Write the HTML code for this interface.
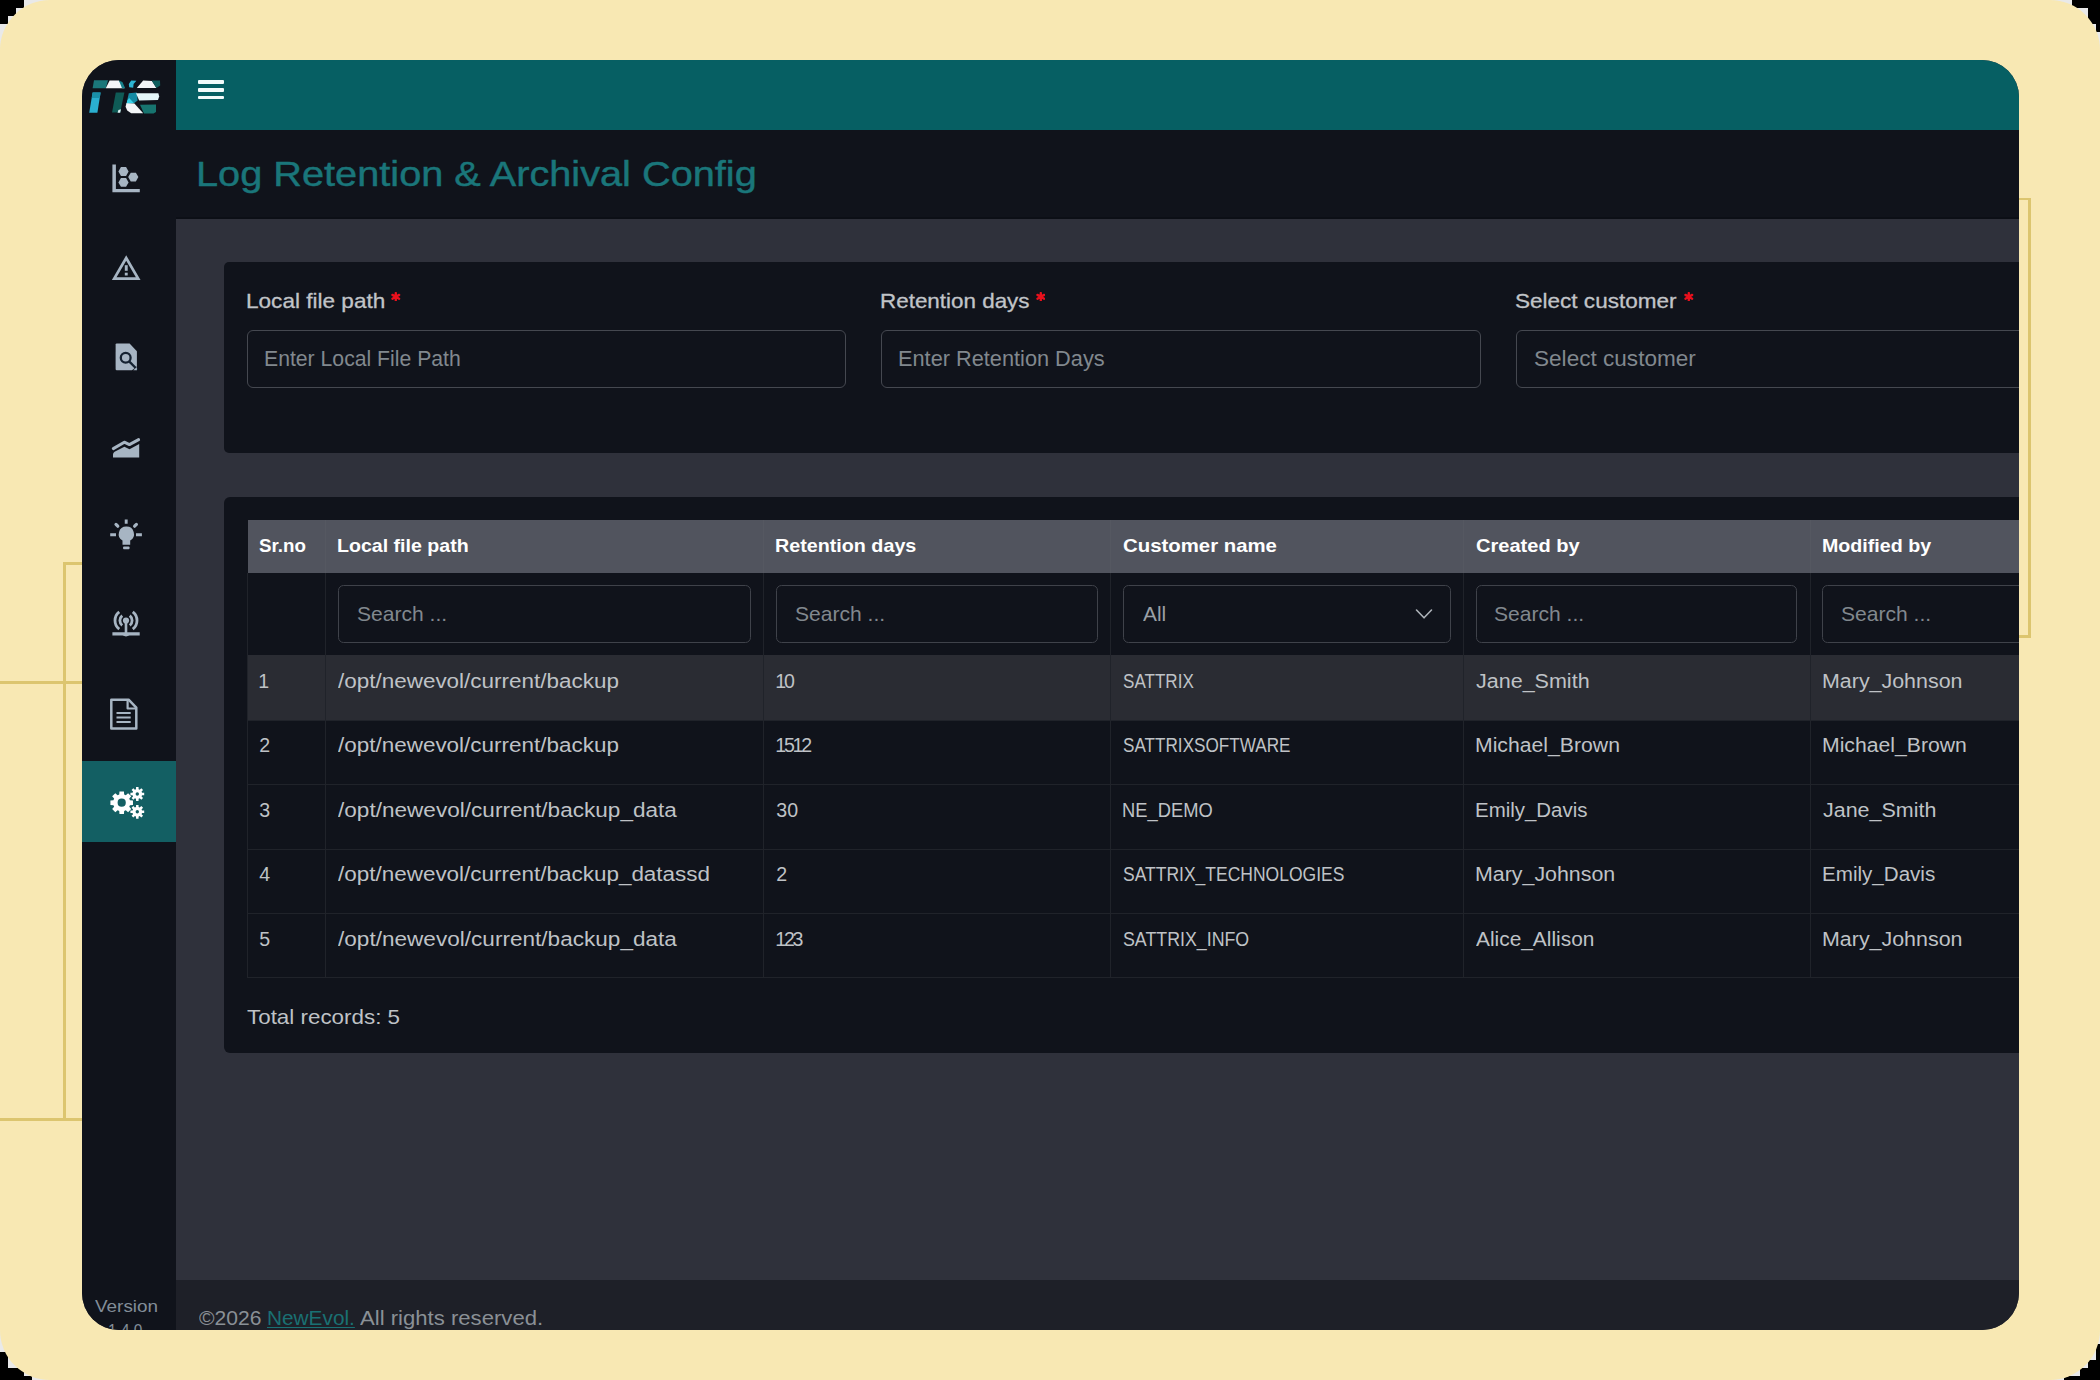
<!DOCTYPE html>
<html><head><meta charset="utf-8"><title>Log Retention &amp; Archival Config</title>
<style>
html,body{margin:0;padding:0;}
body{width:2100px;height:1380px;overflow:hidden;background:#E9E9E9;position:relative;font-family:"Liberation Sans",sans-serif;}
.k{position:absolute;background:#000;}
#cream{position:absolute;left:0;top:0;width:2100px;height:1380px;background:#F8E8B3;border-radius:50px;}
.ln{position:absolute;background:#DCC56F;}
#win{position:absolute;left:82px;top:59.6px;width:1937px;height:1270.0px;border-radius:37px;overflow:hidden;background:#2F313B;}
.b{position:absolute;}
.t{position:absolute;white-space:pre;line-height:1;transform-origin:0 0;}
</style></head><body>
<div class="k" style="left:0;top:0;width:24px;height:8px"></div><div class="k" style="left:0;top:8px;width:16px;height:8px"></div><div class="k" style="left:0;top:16px;width:8px;height:8px"></div>
<div class="k" style="left:2072px;top:0;width:28px;height:8px"></div><div class="k" style="left:2088px;top:8px;width:12px;height:16px"></div><div class="k" style="left:2096px;top:24px;width:4px;height:8px"></div>
<div class="k" style="left:0;top:1352px;width:8px;height:28px"></div><div class="k" style="left:8px;top:1368px;width:16px;height:12px"></div><div class="k" style="left:24px;top:1376px;width:8px;height:4px"></div>
<div class="k" style="left:2096px;top:1344px;width:4px;height:36px"></div><div class="k" style="left:2088px;top:1360px;width:8px;height:20px"></div><div class="k" style="left:2080px;top:1368px;width:8px;height:12px"></div><div class="k" style="left:2064px;top:1376px;width:16px;height:4px"></div>
<div id="cream"></div>
<div class="ln" style="left:63px;top:562px;width:2.8px;height:557.5px"></div>
<div class="ln" style="left:63px;top:562px;width:20px;height:2.6px"></div>
<div class="ln" style="left:0;top:681px;width:83px;height:2.7px"></div>
<div class="ln" style="left:0;top:1118.2px;width:83px;height:2.7px"></div>
<div class="ln" style="left:2018px;top:198px;width:12.6px;height:2.4px"></div>
<div class="ln" style="left:2028.2px;top:198px;width:2.4px;height:439.5px"></div>
<div class="ln" style="left:2018px;top:635.2px;width:12.6px;height:2.4px"></div>
<div id="win">
<div class="b" style="left:0.00px;top:-0.60px;width:94.00px;height:1272.00px;background:#10131B;"></div>
<div class="b" style="left:94.00px;top:-0.60px;width:1844.00px;height:71.40px;background:#065F63;"></div>
<div class="b" style="left:94.00px;top:70.80px;width:1844.00px;height:88.30px;background:#10131B;"></div>
<div class="b" style="left:94.00px;top:157.60px;width:1844.00px;height:1.50px;background:#0C0F16;"></div>
<div class="b" style="left:94.00px;top:1220.80px;width:1844.00px;height:50.60px;background:#1E2028;"></div>
<div class="b" style="left:0.00px;top:701.20px;width:94.00px;height:81.50px;background:#135F63;"></div>
<div class="b" style="left:116.00px;top:20.70px;width:25.50px;height:3.90px;background:#F2FBFB;border-radius:1px;"></div>
<div class="b" style="left:116.00px;top:28.20px;width:25.50px;height:4.00px;background:#F2FBFB;border-radius:1px;"></div>
<div class="b" style="left:116.00px;top:36.00px;width:25.50px;height:3.80px;background:#F2FBFB;border-radius:1px;"></div>
<div class="b" style="left:142.00px;top:202.40px;width:1816.00px;height:191.50px;background:#10131B;border-radius:5px;"></div>
<div class="b" style="left:142.00px;top:437.10px;width:1816.00px;height:556.60px;background:#10131B;border-radius:6px;"></div>
<div class="b" style="left:164.70px;top:270.40px;width:599.00px;height:57.60px;border:1.5px solid #454850;border-radius:6px;box-sizing:border-box;"></div>
<div class="b" style="left:798.70px;top:270.40px;width:600.00px;height:57.60px;border:1.5px solid #454850;border-radius:6px;box-sizing:border-box;"></div>
<div class="b" style="left:1434.00px;top:270.40px;width:604.00px;height:57.60px;border:1.5px solid #454850;border-radius:6px;box-sizing:border-box;"></div>
<div class="b" style="left:165.70px;top:460.40px;width:1792.30px;height:52.70px;background:#51545E;"></div>
<div class="b" style="left:165.70px;top:595.40px;width:1792.30px;height:65.70px;background:#2A2C33;"></div>
<div class="b" style="left:165.00px;top:660.40px;width:1793.00px;height:1.00px;background:#20232A;"></div>
<div class="b" style="left:165.00px;top:724.40px;width:1793.00px;height:1.00px;background:#20232A;"></div>
<div class="b" style="left:165.00px;top:789.40px;width:1793.00px;height:1.00px;background:#20232A;"></div>
<div class="b" style="left:165.00px;top:853.40px;width:1793.00px;height:1.00px;background:#20232A;"></div>
<div class="b" style="left:165.00px;top:917.40px;width:1793.00px;height:1.00px;background:#20232A;"></div>
<div class="b" style="left:165.00px;top:513.40px;width:1.00px;height:405.00px;background:#20232A;"></div>
<div class="b" style="left:243.00px;top:513.40px;width:1.00px;height:405.00px;background:#20232A;"></div>
<div class="b" style="left:681.00px;top:513.40px;width:1.00px;height:405.00px;background:#20232A;"></div>
<div class="b" style="left:1028.00px;top:513.40px;width:1.00px;height:405.00px;background:#20232A;"></div>
<div class="b" style="left:1381.00px;top:513.40px;width:1.00px;height:405.00px;background:#20232A;"></div>
<div class="b" style="left:1728.00px;top:513.40px;width:1.00px;height:405.00px;background:#20232A;"></div>
<div class="b" style="left:243.00px;top:460.40px;width:1.00px;height:53.00px;background:rgba(255,255,255,0.025);"></div>
<div class="b" style="left:681.00px;top:460.40px;width:1.00px;height:53.00px;background:rgba(255,255,255,0.025);"></div>
<div class="b" style="left:1028.00px;top:460.40px;width:1.00px;height:53.00px;background:rgba(255,255,255,0.025);"></div>
<div class="b" style="left:1381.00px;top:460.40px;width:1.00px;height:53.00px;background:rgba(255,255,255,0.025);"></div>
<div class="b" style="left:1728.00px;top:460.40px;width:1.00px;height:53.00px;background:rgba(255,255,255,0.025);"></div>
<div class="b" style="left:256.30px;top:525.40px;width:412.70px;height:57.70px;border:1.3px solid #3F424A;border-radius:5.5px;box-sizing:border-box;"></div>
<div class="b" style="left:694.20px;top:525.40px;width:321.40px;height:57.70px;border:1.3px solid #3F424A;border-radius:5.5px;box-sizing:border-box;"></div>
<div class="b" style="left:1040.60px;top:525.40px;width:328.60px;height:57.70px;border:1.3px solid #3F424A;border-radius:5.5px;box-sizing:border-box;"></div>
<div class="b" style="left:1393.50px;top:525.40px;width:321.80px;height:57.70px;border:1.3px solid #3F424A;border-radius:5.5px;box-sizing:border-box;"></div>
<div class="b" style="left:1740.20px;top:525.40px;width:297.80px;height:57.70px;border:1.3px solid #3F424A;border-radius:5.5px;box-sizing:border-box;"></div>
<svg class="b" style="left:1332px;top:546.4px" width="20" height="16" viewBox="0 0 20 16"><path d="M2.5 4 L10 11.8 L17.5 4" fill="none" stroke="#AEB3B9" stroke-width="1.6" stroke-linecap="round" stroke-linejoin="round"/></svg>
<svg class="b" style="left:309.4px;top:232.20000000000002px" width="9.6" height="9.6" viewBox="0 0 12 12"><g stroke="#E8101C" stroke-width="2.9" stroke-linecap="round"><path d="M6 1.2V10.8M1.8 3.6L10.2 8.4M10.2 3.6L1.8 8.4"/></g></svg>
<svg class="b" style="left:953.7px;top:232.20000000000002px" width="9.6" height="9.6" viewBox="0 0 12 12"><g stroke="#E8101C" stroke-width="2.9" stroke-linecap="round"><path d="M6 1.2V10.8M1.8 3.6L10.2 8.4M10.2 3.6L1.8 8.4"/></g></svg>
<svg class="b" style="left:1602.3px;top:232.20000000000002px" width="9.6" height="9.6" viewBox="0 0 12 12"><g stroke="#E8101C" stroke-width="2.9" stroke-linecap="round"><path d="M6 1.2V10.8M1.8 3.6L10.2 8.4M10.2 3.6L1.8 8.4"/></g></svg>
<svg class="b" style="left:0;top:0" width="94" height="1271" viewBox="82 59.6 94 1271">
<polygon points="94.00,79.80 108.00,79.80 105.80,87.80 92.60,87.80" fill="#1B777A"/>
<polygon points="109.60,80.00 118.80,80.00 122.40,84.00 124.40,87.80 105.80,87.80" fill="#F4F6F8"/>
<polygon points="118.80,80.00 122.40,81.60 125.20,87.80 122.00,87.80 120.00,82.80" fill="#17808A"/>
<polygon points="131.20,80.00 136.40,80.40 133.60,83.60 133.20,87.40 129.20,86.80 128.80,83.60" fill="#2DB4D2"/>
<polygon points="143.20,80.00 152.00,80.60 156.40,87.60 136.80,87.60" fill="#F2F5F7"/>
<polygon points="151.60,80.00 160.00,80.00 160.20,85.20 156.40,87.60" fill="#0F5F5E"/>
<polygon points="92.60,92.00 100.60,92.00 97.40,112.40 89.20,112.40" fill="#2AAFD0"/>
<polygon points="92.60,92.00 100.60,92.00 99.80,97.60 91.80,97.60" fill="#1A8FA8"/>
<polygon points="115.80,92.00 124.40,92.00 120.20,112.00 112.00,112.00" fill="#0F5B56"/>
<polygon points="118.40,109.60 121.00,108.80 120.20,112.40 117.60,112.40" fill="#DDF1F2"/>
<polygon points="128.80,92.80 136.80,92.00 137.60,100.00 134.00,102.80 127.20,100.00" fill="#138AA3"/>
<polygon points="129.20,97.60 134.00,102.80 126.40,103.60 127.20,100.00" fill="#35D0E8"/>
<polygon points="136.00,92.80 158.40,92.80 159.20,96.00 158.00,99.60 139.20,100.00" fill="#E4F6F9"/>
<polygon points="126.40,102.80 134.40,103.20 143.20,112.80 131.20,112.80 127.20,110.00 125.60,106.40" fill="#F3F5F7"/>
<polygon points="140.00,104.40 156.00,104.00 156.00,111.60 153.60,113.00 144.00,113.00" fill="#17746F"/>
<path d="M112.4 164.2 H115.9 V188.6 H139.8 V191.9 H112.4Z" fill="#A7B5C3"/>
<polygon points="128.60,171.10 126.05,175.52 120.95,175.52 118.40,171.10 120.95,166.68 126.05,166.68" fill="#A7B5C3"/>
<polygon points="128.60,182.00 126.05,186.42 120.95,186.42 118.40,182.00 120.95,177.58 126.05,177.58" fill="#A7B5C3"/>
<polygon points="138.40,176.70 135.85,181.12 130.75,181.12 128.20,176.70 130.75,172.28 135.85,172.28" fill="#A7B5C3"/>
<path d="M126.2 257.6 L138.2 278.2 H114.2Z" fill="none" stroke="#A7B5C3" stroke-width="2.7" stroke-linejoin="miter"/>
<rect x="124.8" y="264.8" width="2.9" height="5.6" fill="#A7B5C3"/><rect x="124.8" y="272.3" width="2.9" height="2.8" fill="#A7B5C3"/>
<path d="M116.8 343 H129.6 L136.9 350.8 V366 L132 369.9 H116.8 Q115.6 369.9 115.6 368.7 V344.2 Q115.6 343 116.8 343Z" fill="#A7B5C3"/>
<circle cx="125.7" cy="357.4" r="4.9" fill="none" stroke="#152231" stroke-width="2.3"/>
<path d="M129.4 361.2 L137.5 369.3" stroke="#152231" stroke-width="2.3"/>
<path d="M133.2 369.9 L136.9 366.6 V369.9Z" fill="#A7B5C3"/>
<path d="M113.3 448.2 L124.3 441.8 L129.4 444.2 L138.6 439.2" fill="none" stroke="#A7B5C3" stroke-width="3" stroke-linecap="round" stroke-linejoin="round"/>
<path d="M113 457 V454 Q113 452.3 114.6 451.3 L124.4 446.4 L129.5 448.8 L139.2 443.5 V457Z" fill="#A7B5C3"/>
<path d="M126.3 526.2 A7.5 7.5 0 0 1 130.2 540.2 V544.3 H122.5 V540.2 A7.5 7.5 0 0 1 126.3 526.2Z" fill="#A7B5C3"/>
<rect x="123.1" y="546.1" width="6.4" height="2.7" rx="0.8" fill="#A7B5C3"/>
<g stroke="#A7B5C3" stroke-width="2.9" stroke-linecap="butt"><path d="M126.2 519.2V523.3M110.2 534.3H116M136 534.3H141.9"/><path d="M116.0 524.0L117.8 525.8M136.4 524.0L134.6 525.8" stroke-linecap="round" stroke-width="3.2"/></g>
<circle cx="126" cy="620.1" r="3.1" fill="#A7B5C3"/>
<g fill="none" stroke="#A7B5C3" stroke-width="2.8">
<path d="M129.76 615.29 A6.1 6.1 0 0 1 129.76 624.91"/><path d="M122.24 624.91 A6.1 6.1 0 0 1 122.24 615.29"/>
<path d="M132.77 611.43 A11 11 0 0 1 132.77 628.77"/><path d="M119.23 628.77 A11 11 0 0 1 119.23 611.43"/></g>
<path d="M124.7 622 H127.3 V631.9 H139.7 V635.2 H129.5 Q126 636.8 122.5 635.2 H112.4 V631.9 H124.7Z" fill="#A7B5C3"/>
<g fill="none" stroke="#A7B5C3" stroke-width="2.5" stroke-linejoin="round"><path d="M111.3 699.3 H128.6 L136.3 707.2 V728.1 H111.3Z"/><path d="M127.6 699.6 V708.1 H136" stroke-width="2.2"/></g>
<g stroke="#A7B5C3" stroke-width="2"><path d="M116.5 712.6H130.7M116.5 717.1H130.7M116.5 721.6H130.7"/></g>
<path d="M129.94 799.84 L132.98 800.06 L132.98 804.54 L129.94 804.76 L129.27 806.38 L131.26 808.69 L128.09 811.86 L125.78 809.87 L124.16 810.54 L123.94 813.58 L119.46 813.58 L119.24 810.54 L117.62 809.87 L115.31 811.86 L112.14 808.69 L114.13 806.38 L113.46 804.76 L110.42 804.54 L110.42 800.06 L113.46 799.84 L114.13 798.22 L112.14 795.91 L115.31 792.74 L117.62 794.73 L119.24 794.06 L119.46 791.02 L123.94 791.02 L124.16 794.06 L125.78 794.73 L128.09 792.74 L131.26 795.91 L129.27 798.22Z M125.80 802.30 A4.1 4.1 0 1 0 117.60 802.30 A4.1 4.1 0 1 0 125.80 802.30Z" fill="#FFFFFF" fill-rule="evenodd"/>
<path d="M142.02 792.29 L144.19 792.37 L144.19 794.83 L142.02 794.91 L141.57 796.01 L143.04 797.60 L141.30 799.34 L139.71 797.87 L138.61 798.32 L138.53 800.49 L136.07 800.49 L135.99 798.32 L134.89 797.87 L133.30 799.34 L131.56 797.60 L133.03 796.01 L132.58 794.91 L130.41 794.83 L130.41 792.37 L132.58 792.29 L133.03 791.19 L131.56 789.60 L133.30 787.86 L134.89 789.33 L135.99 788.88 L136.07 786.71 L138.53 786.71 L138.61 788.88 L139.71 789.33 L141.30 787.86 L143.04 789.60 L141.57 791.19Z M139.00 793.60 A1.7 1.7 0 1 0 135.60 793.60 A1.7 1.7 0 1 0 139.00 793.60Z" fill="#FFFFFF" fill-rule="evenodd"/>
<path d="M142.02 810.09 L144.19 810.17 L144.19 812.63 L142.02 812.71 L141.57 813.81 L143.04 815.40 L141.30 817.14 L139.71 815.67 L138.61 816.12 L138.53 818.29 L136.07 818.29 L135.99 816.12 L134.89 815.67 L133.30 817.14 L131.56 815.40 L133.03 813.81 L132.58 812.71 L130.41 812.63 L130.41 810.17 L132.58 810.09 L133.03 808.99 L131.56 807.40 L133.30 805.66 L134.89 807.13 L135.99 806.68 L136.07 804.51 L138.53 804.51 L138.61 806.68 L139.71 807.13 L141.30 805.66 L143.04 807.40 L141.57 808.99Z M139.00 811.40 A1.7 1.7 0 1 0 135.60 811.40 A1.7 1.7 0 1 0 139.00 811.40Z" fill="#FFFFFF" fill-rule="evenodd"/>
</svg>
<span class="t" style="left:114.43px;top:96.77px;font-size:35px;color:#1A767A;letter-spacing:-0.000px;-webkit-text-stroke:0.45px #1A767A;transform:scaleX(1.1347);">Log Retention &amp; Archival Config</span>
<span class="t" style="left:163.61px;top:231.09px;font-size:20.8px;color:#C1C4C8;letter-spacing:0.000px;-webkit-text-stroke:0.3px #C1C4C8;transform:scaleX(1.0854);">Local file path</span>
<span class="t" style="left:798.22px;top:231.09px;font-size:20.8px;color:#C1C4C8;letter-spacing:-0.000px;-webkit-text-stroke:0.3px #C1C4C8;transform:scaleX(1.0777);">Retention days</span>
<span class="t" style="left:1433.40px;top:231.09px;font-size:20.8px;color:#C1C4C8;letter-spacing:-0.000px;-webkit-text-stroke:0.3px #C1C4C8;transform:scaleX(1.0833);">Select customer</span>
<span class="t" style="left:182.00px;top:287.95px;font-size:21.2px;color:#81888E;letter-spacing:0.000px;transform:scaleX(1.0005);">Enter Local File Path</span>
<span class="t" style="left:816.27px;top:287.95px;font-size:21.2px;color:#81888E;letter-spacing:-0.000px;transform:scaleX(1.0261);">Enter Retention Days</span>
<span class="t" style="left:1451.70px;top:287.95px;font-size:21.2px;color:#81888E;letter-spacing:0.000px;transform:scaleX(1.0655);">Select customer</span>
<span class="t" style="left:177.30px;top:477.69px;font-size:18.2px;color:#FFFFFF;letter-spacing:-0.000px;font-weight:700;transform:scaleX(1.0294);">Sr.no</span>
<span class="t" style="left:255.22px;top:477.69px;font-size:18.2px;color:#FFFFFF;letter-spacing:0.000px;font-weight:700;transform:scaleX(1.0768);">Local file path</span>
<span class="t" style="left:693.12px;top:477.69px;font-size:18.2px;color:#FFFFFF;letter-spacing:0.000px;font-weight:700;transform:scaleX(1.0839);">Retention days</span>
<span class="t" style="left:1040.90px;top:477.69px;font-size:18.2px;color:#FFFFFF;letter-spacing:-0.000px;font-weight:700;transform:scaleX(1.1199);">Customer name</span>
<span class="t" style="left:1394.10px;top:477.69px;font-size:18.2px;color:#FFFFFF;letter-spacing:0.000px;font-weight:700;transform:scaleX(1.1034);">Created by</span>
<span class="t" style="left:1739.72px;top:477.69px;font-size:18.2px;color:#FFFFFF;letter-spacing:-0.000px;font-weight:700;transform:scaleX(1.0801);">Modified by</span>
<span class="t" style="left:274.70px;top:543.32px;font-size:21px;color:#81888E;letter-spacing:0.000px;transform:scaleX(1.0029);">Search ...</span>
<span class="t" style="left:712.60px;top:543.32px;font-size:21px;color:#81888E;letter-spacing:0.000px;transform:scaleX(1.0029);">Search ...</span>
<span class="t" style="left:1411.90px;top:543.32px;font-size:21px;color:#81888E;letter-spacing:0.000px;transform:scaleX(1.0029);">Search ...</span>
<span class="t" style="left:1758.60px;top:543.32px;font-size:21px;color:#81888E;letter-spacing:0.000px;transform:scaleX(1.0029);">Search ...</span>
<span class="t" style="left:1060.50px;top:543.32px;font-size:21px;color:#9AA0A6;letter-spacing:-0.000px;transform:scaleX(0.9924);">All</span>
<span class="t" style="left:176.30px;top:611.91px;font-size:19.6px;color:#BFC2C6;letter-spacing:0.000px;">1</span>
<span class="t" style="left:177.30px;top:676.51px;font-size:19.6px;color:#BFC2C6;letter-spacing:0.000px;">2</span>
<span class="t" style="left:177.30px;top:741.01px;font-size:19.6px;color:#BFC2C6;letter-spacing:0.000px;">3</span>
<span class="t" style="left:177.30px;top:805.61px;font-size:19.6px;color:#BFC2C6;letter-spacing:0.000px;">4</span>
<span class="t" style="left:177.30px;top:870.11px;font-size:19.6px;color:#BFC2C6;letter-spacing:0.000px;">5</span>
<span class="t" style="left:256.30px;top:611.91px;font-size:19.6px;color:#BFC2C6;letter-spacing:-0.000px;transform:scaleX(1.1462);">/opt/newevol/current/backup</span>
<span class="t" style="left:256.30px;top:676.51px;font-size:19.6px;color:#BFC2C6;letter-spacing:-0.000px;transform:scaleX(1.1462);">/opt/newevol/current/backup</span>
<span class="t" style="left:256.30px;top:741.01px;font-size:19.6px;color:#BFC2C6;letter-spacing:0.019px;transform:scaleX(1.15);">/opt/newevol/current/backup_data</span>
<span class="t" style="left:256.30px;top:805.61px;font-size:19.6px;color:#BFC2C6;letter-spacing:-0.000px;transform:scaleX(1.1462);">/opt/newevol/current/backup_datassd</span>
<span class="t" style="left:256.30px;top:870.11px;font-size:19.6px;color:#BFC2C6;letter-spacing:0.019px;transform:scaleX(1.15);">/opt/newevol/current/backup_data</span>
<span class="t" style="left:693.20px;top:611.91px;font-size:19.6px;color:#BFC2C6;letter-spacing:-2.200px;">10</span>
<span class="t" style="left:693.20px;top:676.51px;font-size:19.6px;color:#BFC2C6;letter-spacing:-2.200px;">1512</span>
<span class="t" style="left:694.20px;top:741.01px;font-size:19.6px;color:#BFC2C6;letter-spacing:0.203px;">30</span>
<span class="t" style="left:694.20px;top:805.61px;font-size:19.6px;color:#BFC2C6;letter-spacing:0.000px;">2</span>
<span class="t" style="left:693.20px;top:870.11px;font-size:19.6px;color:#BFC2C6;letter-spacing:-2.200px;">123</span>
<span class="t" style="left:1040.70px;top:611.91px;font-size:19.6px;color:#BFC2C6;letter-spacing:0.001px;transform:scaleX(0.8705);">SATTRIX</span>
<span class="t" style="left:1040.70px;top:676.51px;font-size:19.6px;color:#BFC2C6;letter-spacing:-0.000px;transform:scaleX(0.8741);">SATTRIXSOFTWARE</span>
<span class="t" style="left:1039.76px;top:741.01px;font-size:19.6px;color:#BFC2C6;letter-spacing:0.001px;transform:scaleX(0.9356);">NE_DEMO</span>
<span class="t" style="left:1040.70px;top:805.61px;font-size:19.6px;color:#BFC2C6;letter-spacing:-0.001px;transform:scaleX(0.8931);">SATTRIX_TECHNOLOGIES</span>
<span class="t" style="left:1040.70px;top:870.11px;font-size:19.6px;color:#BFC2C6;letter-spacing:-0.001px;transform:scaleX(0.9082);">SATTRIX_INFO</span>
<span class="t" style="left:1394.20px;top:611.91px;font-size:19.6px;color:#BFC2C6;letter-spacing:-0.000px;transform:scaleX(1.0978);">Jane_Smith</span>
<span class="t" style="left:1393.12px;top:676.51px;font-size:19.6px;color:#BFC2C6;letter-spacing:0.000px;transform:scaleX(1.0821);">Michael_Brown</span>
<span class="t" style="left:1393.16px;top:741.01px;font-size:19.6px;color:#BFC2C6;letter-spacing:0.000px;transform:scaleX(1.0431);">Emily_Davis</span>
<span class="t" style="left:1393.11px;top:805.61px;font-size:19.6px;color:#BFC2C6;letter-spacing:-0.000px;transform:scaleX(1.0907);">Mary_Johnson</span>
<span class="t" style="left:1394.20px;top:870.11px;font-size:19.6px;color:#BFC2C6;letter-spacing:0.000px;transform:scaleX(1.0654);">Alice_Allison</span>
<span class="t" style="left:1739.51px;top:611.91px;font-size:19.6px;color:#BFC2C6;letter-spacing:0.000px;transform:scaleX(1.093);">Mary_Johnson</span>
<span class="t" style="left:1739.52px;top:676.51px;font-size:19.6px;color:#BFC2C6;letter-spacing:-0.000px;transform:scaleX(1.0814);">Michael_Brown</span>
<span class="t" style="left:1740.60px;top:741.01px;font-size:19.6px;color:#BFC2C6;letter-spacing:0.000px;transform:scaleX(1.0958);">Jane_Smith</span>
<span class="t" style="left:1739.55px;top:805.61px;font-size:19.6px;color:#BFC2C6;letter-spacing:-0.000px;transform:scaleX(1.0506);">Emily_Davis</span>
<span class="t" style="left:1739.51px;top:870.11px;font-size:19.6px;color:#BFC2C6;letter-spacing:0.000px;transform:scaleX(1.093);">Mary_Johnson</span>
<span class="t" style="left:164.70px;top:945.92px;font-size:21px;color:#BFC2C6;letter-spacing:-0.000px;transform:scaleX(1.0659);">Total records: 5</span>
<span class="t" style="left:116.60px;top:1248.47px;font-size:20px;color:#8A9096;letter-spacing:0.001px;transform:scaleX(1.054);">©2026</span>
<span class="t" style="left:184.66px;top:1248.47px;font-size:20px;color:#1A7073;letter-spacing:-0.000px;transform:scaleX(1.0401);text-decoration:underline;text-decoration-thickness:1.4px;text-underline-offset:1.6px;">NewEvol.</span>
<span class="t" style="left:278.00px;top:1248.47px;font-size:20px;color:#8A9096;letter-spacing:0.000px;transform:scaleX(1.1057);">All rights reserved.</span>
<span class="t" style="left:12.60px;top:1239.05px;font-size:16.6px;color:#828D98;letter-spacing:-0.000px;transform:scaleX(1.1394);">Version</span>
<span class="t" style="left:26.47px;top:1263.15px;font-size:16.6px;color:#828D98;letter-spacing:0.000px;transform:scaleX(0.9305);">1.4.0</span>
</div>
</body></html>
